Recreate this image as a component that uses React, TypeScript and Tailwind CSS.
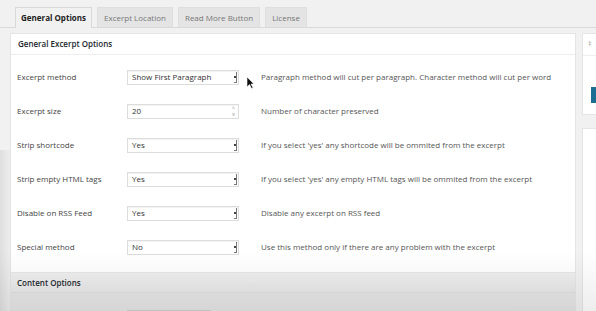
import React from 'react';

const rows = [
  { label: 'Excerpt method', value: 'Show First Paragraph', kind: 'select', desc: 'Paragraph method will cut per paragraph. Character method will cut per word' },
  { label: 'Excerpt size', value: '20', kind: 'number', desc: 'Number of character preserved' },
  { label: 'Strip shortcode', value: 'Yes', kind: 'select', desc: "If you select 'yes' any shortcode will be ommited from the excerpt" },
  { label: 'Strip empty HTML tags', value: 'Yes', kind: 'select', desc: "If you select 'yes' any empty HTML tags will be ommited from the excerpt" },
  { label: 'Disable on RSS Feed', value: 'Yes', kind: 'select', desc: 'Disable any excerpt on RSS feed' },
  { label: 'Special method', value: 'No', kind: 'select', desc: 'Use this method only if there are any problem with the excerpt' },
];

const tabs = ['General Options', 'Excerpt Location', 'Read More Button', 'License'];

function Field({ value, kind }: { value: string; kind: string }) {
  return (
    <div className="shrink-0 w-[112px] h-[15px] border border-[#dcdcdc] bg-white flex items-center justify-between pl-[4px] pr-[1px] shadow-[inset_0_1px_1px_rgba(0,0,0,0.05)]">
      <span className="text-[8px] text-[#333] whitespace-nowrap">{value}</span>
      {kind === 'number' ? (
        <div className="flex flex-col items-center justify-center h-full w-[7px] text-[5px] leading-[6px] text-[#888]">
          <span>^</span>
          <span>v</span>
        </div>
      ) : (
        <div className="h-[11px] w-[3px] flex items-center border-r border-b border-[#777]">
          <span className="block w-[2px] h-[2px] bg-[#444]"></span>
        </div>
      )}
    </div>
  );
}

export default function App() {
  return (
    <div className="relative w-[596px] h-[311px] overflow-hidden bg-[#f1f1f1] text-[#444]" style={{ fontFamily: '"Open Sans", "Noto Sans", sans-serif' }}>
      <div className="h-[28px] border-b border-[#d9d9d9] flex items-end pl-[15px] gap-[5px]">
        {tabs.map((t, i) => (
          <div
            key={t}
            className={
              i === 0
                ? 'h-[21px] -mb-px px-[5px] flex items-center border border-b-0 border-[#d9d9d9] bg-[#f1f1f1] text-[8px] font-bold text-[#222] whitespace-nowrap'
                : 'h-[20px] px-[6px] flex items-center border border-b-0 border-[#dedede] bg-[#e4e4e4] text-[8px] font-medium text-[#777] whitespace-nowrap'
            }
          >
            {t}
          </div>
        ))}
      </div>

      <div className="flex mt-[5px]">
        <div className="shrink-0 ml-[10px] w-[566px] bg-white border border-[#e5e5e5] flex flex-col">
          <div className="h-[21px] flex items-center px-[7px] border-b border-[#eeeeee] text-[8px] font-semibold text-[#23282d]">
            General Excerpt Options
          </div>
          <div className="pt-[5px] pb-[8px]">
            {rows.map((r) => (
              <div key={r.label} className="h-[34px] flex items-center">
                <div className="shrink-0 w-[116px] pl-[6px] text-[8px] text-[#444] whitespace-nowrap">{r.label}</div>
                <Field value={r.value} kind={r.kind} />
                <div className="ml-[22px] text-[8px] text-[#555] whitespace-nowrap">{r.desc}</div>
              </div>
            ))}
          </div>
          <div className="h-[21px] flex items-center px-[6px] bg-gradient-to-b from-[#efefef] to-[#e8e8e8] border-t border-[#e6e6e6] border-b border-b-[#dedede] text-[8px] font-semibold text-[#23282d]">
            Content Options
          </div>
          <div className="h-[40px] bg-[#e6e6e6] pl-[116px] pt-[17px]">
            <div className="w-[84px] h-[15px] bg-[#dedede] border border-[#cfcfcf]"></div>
          </div>
        </div>

        <div className="shrink-0 ml-[6px] flex flex-col gap-[13px]">
          <div className="w-[40px] h-[82px] bg-white border border-[#e5e5e5]">
            <div className="h-[22px] border-b border-[#eeeeee] pl-[5px] flex items-center text-[7px] text-[#999]">‡</div>
            <div className="pl-[8px] pt-[31px]">
              <div className="w-[20px] h-[16px] bg-[#1c6f92]"></div>
            </div>
          </div>
          <div className="w-[40px] h-[200px] bg-white border border-[#e5e5e5]"></div>
        </div>
      </div>

      <div className="pointer-events-none absolute inset-x-0 bottom-0 h-[60px] bg-gradient-to-b from-transparent to-black/[0.07]"></div>
      <div className="pointer-events-none absolute left-0 top-[150px] bottom-0 w-[12px] bg-gradient-to-r from-black/[0.08] to-transparent"></div>

      <svg className="absolute left-[246px] top-[76px]" width="9" height="13" viewBox="0 0 9 13">
        <path d="M1 1 L1 11 L3.5 8.5 L5.5 12.5 L7 11.8 L5 8 L8 8 Z" fill="#111" stroke="#fff" strokeWidth="0.6" />
      </svg>
    </div>
  );
}
